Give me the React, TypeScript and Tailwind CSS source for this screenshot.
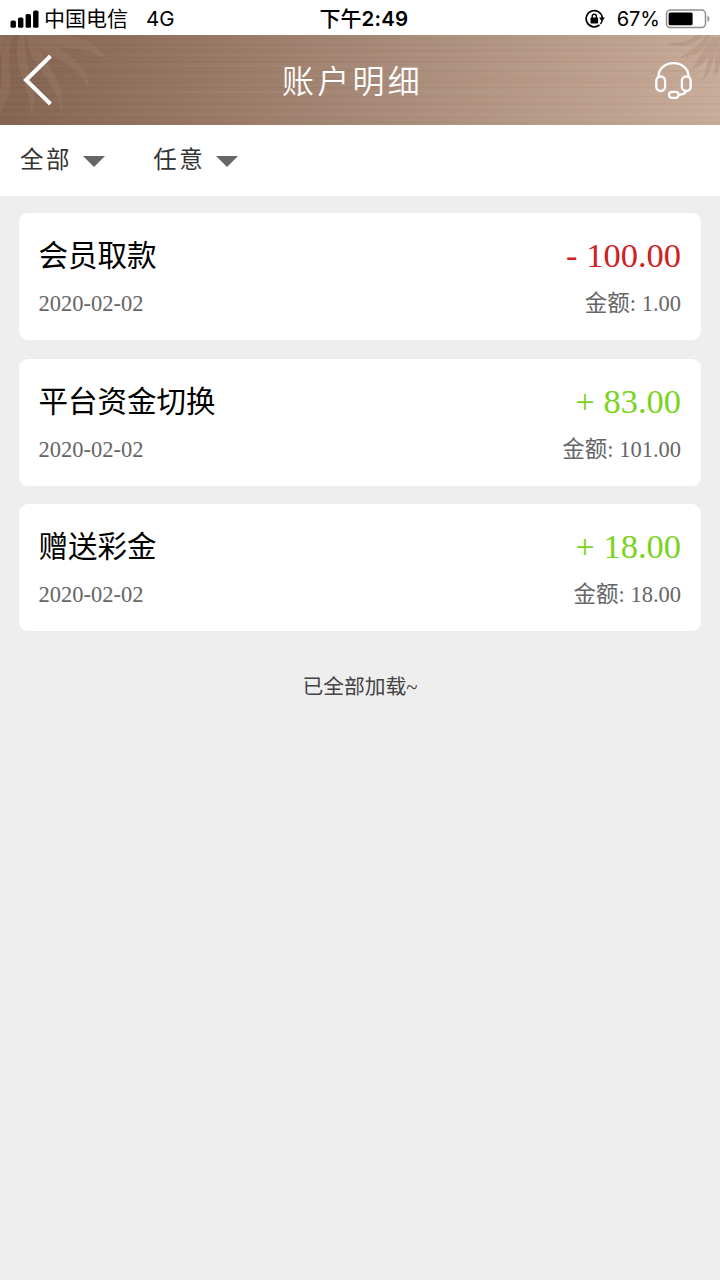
type Entry = {
  id: number;
  title: string;
  date: string;
  change: number;
  amount: number;
};

const entries: Entry[] = [
  { id: 1, title: "会员取款", date: "2020-02-02", change: -100, amount: 1 },
  { id: 2, title: "平台资金切换", date: "2020-02-02", change: 83, amount: 101 },
  { id: 3, title: "赠送彩金", date: "2020-02-02", change: 18, amount: 18 },
];

const filters = ["全部", "任意"];

// brushed-metal streaks: [y, height, opacity]
const darkStreaks = [
  [3, 1, 0.03], [9, 2, 0.03], [15, 1, 0.05], [22, 1, 0.03], [26, 1, 0.06],
  [35, 2, 0.03], [43, 1, 0.04], [47, 1, 0.04], [52, 1, 0.05], [61, 1, 0.04],
  [68, 2, 0.03], [75, 1, 0.05], [82, 1, 0.03], [87, 1, 0.05],
];
const lightStreaks = [
  [6, 1, 0.03], [12, 1, 0.04], [19, 2, 0.02], [30, 2, 0.03], [40, 1, 0.03],
  [50, 1, 0.03], [56, 2, 0.03], [65, 1, 0.03], [72, 1, 0.04], [79, 1, 0.04],
];

function StatusBar() {
  return (
    <div className="grid h-[35px] grid-cols-3 items-center bg-white text-[20px] leading-[36px] text-black font-['Inter','Noto_Sans_CJK_SC',sans-serif]">
      <div className="flex items-center pl-[10px]">
        <svg width="29" height="18" viewBox="0 0 29 18" className="mr-[5px] shrink-0">
          <rect x="0.5" y="10.5" width="5.4" height="7.3" rx="1.6" />
          <rect x="8" y="7.5" width="5.4" height="10.3" rx="1.6" />
          <rect x="15.6" y="4" width="5.4" height="13.8" rx="1.6" />
          <rect x="23.1" y="0.6" width="5.4" height="17.2" rx="1.6" />
        </svg>
        <span className="pt-px text-[21px] whitespace-nowrap">中国电信</span>
        <span className="ml-[18px] pt-px text-[20.5px]">4G</span>
      </div>
      <div className="pt-px pl-[8px] text-center font-medium whitespace-nowrap">
        <span className="text-[21px]">下午</span>
        <span className="text-[20.5px] font-semibold tracking-[0.2px]">2:49</span>
      </div>
      <div className="flex items-center justify-end pr-[9px]">
        <svg width="20" height="20" viewBox="0 0 20 20" fill="none" className="mr-[12px]">
          <path
            d="M14 16.3A8.1 8.1 0 1 1 17.3 8.6"
            stroke="#000"
            strokeWidth="1.7"
            strokeLinecap="round"
          />
          <path d="M14 8.4h6L17 12.4z" fill="#000" />
          <path d="M17.2 11.5A8.1 8.1 0 0 1 15.4 15" stroke="#000" strokeWidth="1.2" />
          <rect x="5.5" y="8.6" width="7.6" height="5.9" rx="0.8" fill="#000" />
          <path d="M7.2 9V7.3a2.1 2.1 0 0 1 4.2 0V9" stroke="#000" strokeWidth="1.4" />
        </svg>
        <span className="pt-px">67%</span>
        <svg width="46" height="20" viewBox="0 0 46 20" className="ml-[5px]">
          <rect x="1.5" y="1" width="39" height="17.6" rx="4" fill="none" stroke="#8e8e8e" strokeWidth="1.5" />
          <rect x="3.6" y="3.4" width="24" height="12.8" rx="1.5" />
          <path d="M42.5 6.8c2.6 1 2.6 5.2 0 6.2z" fill="#8e8e8e" />
        </svg>
      </div>
    </div>
  );
}

function HeaderTexture() {
  return (
    <svg
      className="pointer-events-none absolute inset-0 h-full w-full"
      viewBox="0 0 720 90"
      preserveAspectRatio="none"
    >
      {darkStreaks.map(([y, h, o]) => (
        <rect key={y} x="0" y={y} width="720" height={h} fill="#4a2a18" opacity={o} />
      ))}
      {lightStreaks.map(([y, h, o]) => (
        <rect key={y} x="0" y={y} width="720" height={h} fill="#fff" opacity={o} />
      ))}
      <g fill="#c9a58d" opacity="0.12">
        <path d="M36 0C54 20 84 6 108 26C98 8 80 2 66 0Z" />
        <path d="M31 0C40 26 76 20 88 54C92 30 66 20 44 0Z" />
        <path d="M26 0C28 32 56 42 61 77C68 46 44 30 34 0Z" />
        <path d="M19 0C10 34 32 50 31 82C42 56 24 36 25 0Z" />
        <path d="M14 0C2 28 20 50 0 78V56C6 40 -4 22 8 0Z" />
        <path d="M0 0H6C4 8 2 16 0 20Z" />
      </g>
      <g fill="#8c6d5a" opacity="0.2">
        <path d="M696 0C690 5 682 9 668 7C678 15 696 10 704 0Z" />
        <path d="M706 0C698 14 692 13 680 23C696 22 706 14 711 0Z" />
        <path d="M712 2C700 18 700 24 690 35C704 32 711 20 716 2Z" />
        <path d="M716 4C705 26 708 34 702 46C713 36 713 22 720 6V2Z" />
        <path d="M720 9C712 26 716 32 714 41C718 38 720 32 720 28Z" />
      </g>
    </svg>
  );
}

function Header() {
  return (
    <header className="relative h-[90px] bg-linear-100 from-[#836350] via-[#a68876] to-[#c9ad9a]">
      <HeaderTexture />
      <div className="relative flex h-full items-center pr-[28px] pl-[23px] text-white">
        <button type="button" aria-label="返回">
          <svg width="30" height="52" viewBox="0 0 30 52" fill="none" stroke="currentColor" strokeWidth="4">
            <path d="M27.5 2L3 26L27.5 50" />
          </svg>
        </button>
        <h1 className="flex-1 pt-[3px] pr-[3px] text-center text-[32px] leading-[90px] font-[350] tracking-[3.2px]">
          账户明细
        </h1>
        <button type="button" aria-label="客服">
          <svg width="37" height="38" viewBox="0 0 37 38" fill="none" stroke="currentColor" strokeWidth="2.3">
            <path d="M3.5 16.5V15.5C3.5 7.8 10.2 2.2 18.5 2.2S33.5 7.8 33.5 15.5V16.5" />
            <rect x="1.3" y="15.5" width="8.8" height="14.5" rx="4.2" />
            <rect x="26.9" y="15.5" width="8.8" height="14.5" rx="4.2" />
            <rect x="14" y="30.8" width="9.6" height="6" rx="3" />
            <path d="M23.6 33.8C27.5 33.6 30.5 32 31.5 30" />
          </svg>
        </button>
      </div>
    </header>
  );
}

function EntryCard({ entry }: { entry: Entry }) {
  const income = entry.change > 0;
  return (
    <li className="flex h-[127px] flex-col rounded-[9px] bg-white pt-[22px] pr-[19.5px] pl-[19.5px]">
      <div className="flex items-start justify-between">
        <span className="text-[29.5px] leading-[42px] text-black">{entry.title}</span>
        <span
          className={`text-[34.5px] leading-[40px] ${income ? "text-[#7bd321]" : "text-[#d0201f]"}`}
        >
          {income ? "+" : "-"} {Math.abs(entry.change).toFixed(2)}
        </span>
      </div>
      <div className="mt-[11px] flex items-center justify-between text-[22.5px] leading-[32px] text-[#666]">
        <span>{entry.date}</span>
        <span>金额: {entry.amount.toFixed(2)}</span>
      </div>
    </li>
  );
}

export default function App() {
  return (
    <div className="min-h-screen w-full bg-[#eee] font-['Liberation_Serif','Noto_Sans_CJK_SC',serif]">
      <StatusBar />
      <Header />
      <div className="flex h-[71px] gap-[48px] bg-white pl-[20px]">
        {filters.map((label) => (
          <button key={label} type="button" className="flex h-[70px] items-center gap-[11px] text-[#333]">
            <span className="pt-px text-[23.5px] tracking-[2.6px]">{label}</span>
            <svg width="22" height="11" viewBox="0 0 22 11" className="mt-[2px]">
              <path d="M0 0H22L11 11Z" fill="#666" />
            </svg>
          </button>
        ))}
      </div>
      <ul className="flex flex-col gap-[18.7px] pt-[17px] pr-[19.5px] pl-[19px]">
        {entries.map((entry) => (
          <EntryCard key={entry.id} entry={entry} />
        ))}
      </ul>
      <p className="mt-[40px] text-center text-[20.8px] leading-[32px] text-[#444]">已全部加载~</p>
    </div>
  );
}
